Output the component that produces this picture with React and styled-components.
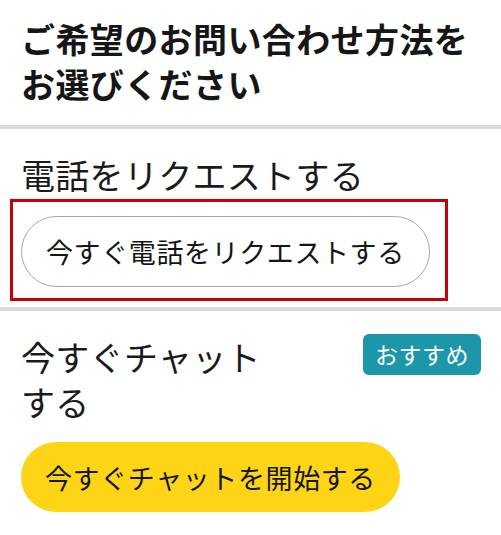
import styled, { createGlobalStyle } from "styled-components";

const GlobalStyle = createGlobalStyle`
  * {
    box-sizing: border-box;
  }
  body {
    margin: 0;
    background: #ffffff;
    font-family: "Noto Sans CJK JP", "Noto Sans", sans-serif;
    color: #1a1a1a;
  }
`;

const Page = styled.div`
  width: 501px;
  height: 535px;
  overflow: hidden;
  background: #ffffff;
`;

const Section = styled.section`
  padding: ${(p) => p.$pad};
  border-bottom: ${(p) => (p.$divider ? "4px solid #dadada" : "none")};
`;

const Title = styled.h1`
  margin: 0;
  font-size: 34px;
  font-weight: 700;
  line-height: 45px;
  letter-spacing: 0.4px;
  color: #161616;
`;

const Heading = styled.h2`
  margin: 0;
  font-size: 34px;
  font-weight: 400;
  line-height: 45px;
  letter-spacing: 0.3px;
  color: #1a1a1a;
  max-width: ${(p) => p.$max || "none"};
`;

const HeadRow = styled.div`
  display: flex;
  justify-content: space-between;
  align-items: flex-start;
`;

const Badge = styled.span`
  display: inline-flex;
  align-items: center;
  justify-content: center;
  width: 118px;
  height: 41px;
  border-radius: 6px;
  background: #1c97a9;
  color: #ffffff;
  font-size: 23px;
  line-height: 1;
  letter-spacing: 0.5px;
  margin-right: -1px;
`;

const Highlight = styled.div`
  width: fit-content;
  margin: 2px 0 0 -11px;
  padding: 14px 15px 11px 8px;
  border: 3px solid #c4000b;
`;

const PillButton = styled.button`
  display: inline-flex;
  align-items: center;
  justify-content: center;
  height: ${(p) => p.$h};
  padding: 0 24px;
  border-radius: 36px;
  border: ${(p) => (p.$primary ? "none" : "1px solid #a8a8a8")};
  background: ${(p) => (p.$primary ? "#fdd516" : "#ffffff")};
  color: #151515;
  font-family: inherit;
  font-size: 27px;
  letter-spacing: 0.6px;
  line-height: 1;
  cursor: pointer;
`;

const ChatButton = styled(PillButton)`
  margin-top: 18px;
`;

export default function App() {
  return (
    <Page>
      <GlobalStyle />
      <Section $divider $pad="16px 21px 19px">
        <Title>
          ご希望のお問い合わせ方法を
          <br />
          お選びください
        </Title>
      </Section>
      <Section $divider $pad="23px 21px 6px">
        <Heading>電話をリクエストする</Heading>
        <Highlight>
          <PillButton $h="71px">今すぐ電話をリクエストする</PillButton>
        </Highlight>
      </Section>
      <Section $pad="23px 21px 0">
        <HeadRow>
          <Heading $max="250px">今すぐチャットする</Heading>
          <Badge>おすすめ</Badge>
        </HeadRow>
        <ChatButton $primary $h="70px">
          今すぐチャットを開始する
        </ChatButton>
      </Section>
    </Page>
  );
}
